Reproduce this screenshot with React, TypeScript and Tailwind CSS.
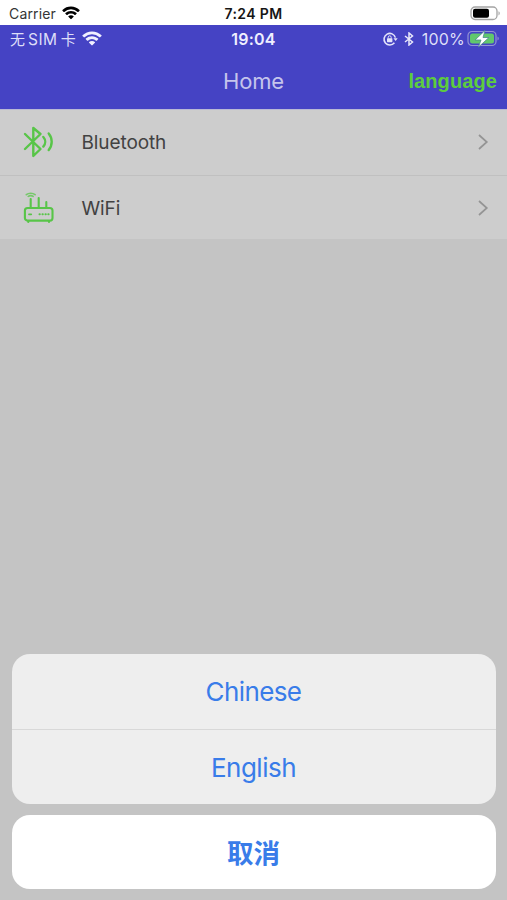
import type { ReactNode } from "react";

function WifiGlyph({ className }: { className: string }) {
  return (
    <svg viewBox="0 0 20 15" className={className} fill="currentColor">
      <path d="M10 0.4c3.7 0 7 1.4 9.5 3.8.2.2.2.5 0 .7l-1.4 1.4c-.2.2-.5.2-.7 0A10.700 10.700 0 0 0 2.600 6.300c-.2.2-.5.2-.7 0L.5 4.900c-.2-.2-.2-.5 0-.7A13.700 13.700 0 0 1 10 .4z" />
      <path d="M10 5.200c2.400 0 4.600.9 6.200 2.400.2.2.2.5 0 .7l-1.400 1.400c-.2.2-.5.2-.7 0a6 6 0 0 0-8.200 0c-.2.2-.5.2-.7 0L3.800 8.300c-.2-.2-.2-.5 0-.7A9 9 0 0 1 10 5.200z" />
      <path d="M10 9.900c1.100 0 2.100.4 2.900 1.100.2.2.2.5 0 .7l-2.500 2.600c-.2.2-.6.2-.8 0l-2.500-2.600c-.2-.2-.2-.5 0-.7.8-.7 1.800-1.100 2.900-1.100z" />
    </svg>
  );
}

function BluetoothIcon() {
  return (
    <svg viewBox="0 0 34 34" className="h-[34px] w-[34px]" fill="none" stroke="#58c548" strokeWidth="2.400" strokeLinecap="round" strokeLinejoin="round">
      <path d="M3 9l15.500 15L11.300 31V3L18.500 9 3 24" />
      <path d="M21.300 12c2.500 2.800 2.500 6.800 0 9.600M26.700 8.500c4 4.900 4 11.700 0 16.600" />
    </svg>
  );
}

function RouterIcon() {
  return (
    <svg viewBox="0 0 34 34" className="h-[34px] w-[34px]" fill="none" stroke="#58c548" strokeWidth="2.100" strokeLinecap="round" strokeLinejoin="round">
      <rect x="2.900" y="17" width="27.600" height="12.600" rx="2.600" />
      <path d="M8.700 8V17M16.700 7V17M24.300 11V17M6.300 30v1M27 30v1" />
      <path d="M7 23.300h2.200" strokeWidth="1.800" />
      <path d="M17.500 23.300h.3M20.500 23.300h.3M23.500 23.300h.3M26.300 23.300h.3" strokeWidth="2" />
      <path d="M4.300 3.700c2.400-2 6.400-2 8.800 0M6.200 5.400c1.500-1 3.500-1 5 0" strokeWidth="1.600" opacity=".75" />
    </svg>
  );
}

function Row({ icon, label }: { icon: ReactNode; label: string }) {
  return (
    <div className="flex h-full items-center pr-[18px] pl-[22px]">
      {icon}
      <span className="ml-[25.500px] flex-1 pt-[2px] text-[19px] leading-6 tracking-[-0.100px] text-[#424242]">{label}</span>
      <svg viewBox="0 0 12 16" className="h-4 w-3" fill="none" stroke="#949494" strokeWidth="1.700">
        <path d="M2 1l7.800 7L2 15" />
      </svg>
    </div>
  );
}

export default function App() {
  return (
    <div className="flex h-[900px] w-[507px] flex-col overflow-hidden bg-[#c4c4c4] font-['Inter','Noto_Sans_CJK_SC',sans-serif]">
      <div className="grid h-[25px] shrink-0 grid-cols-3 items-center bg-white pt-[2px] text-[#161616]">
        <div className="flex items-center pl-[9px]">
          <span className="w-[53px] text-[14px] leading-5 tracking-[0.150px] text-[#353535]">Carrier</span>
          <WifiGlyph className="-mt-px h-[14px] w-[18px] text-black" />
        </div>
        <span className="text-center text-[14px] leading-5 font-semibold tracking-[0.350px]">7:24 PM</span>
        <div className="flex justify-end pr-[6px]">
          <svg viewBox="0 0 31 15" className="h-[15px] w-[31px]">
            <rect x="1" y="1" width="26" height="12.500" rx="4" fill="white" stroke="#a4a4a4" strokeWidth="1.300" />
            <rect x="3" y="2.800" width="16" height="9" rx="2" fill="#000" />
            <path d="M28.500 5.200v4.200c1.700-.6 1.700-3.600 0-4.200z" fill="#a4a4a4" />
          </svg>
        </div>
      </div>

      <header className="h-[85px] shrink-0 border-b border-[#b9b9d5] bg-[#4543c4]">
        <div className="grid h-[28px] grid-cols-3 items-center text-[#dedef8]">
          <div className="flex items-center pl-[10px]">
            <span className="w-[72px] pt-px text-[15px] leading-5 whitespace-pre">无<span className="ml-[3px] mr-[3px] text-[15.500px] tracking-[0.500px]">SIM</span>卡</span>
            <WifiGlyph className="-mt-px h-[15px] w-5 text-[#f0f0ff]" />
          </div>
          <span className="text-center text-[16px] leading-5 font-semibold tracking-[0.200px] text-[#efefff]">19:04</span>
          <div className="flex items-center justify-end pr-[7px]">
            <svg viewBox="0 0 16 16" className="h-4 w-4 shrink-0" fill="none" stroke="#e4e4fa" strokeWidth="1.600">
              <path d="M12.400 11.800a5.800 5.800 0 1 1 1-5.200" />
              <path d="M11.500 7.200h4.200l-2.100 2.700z" fill="#e4e4fa" stroke="none" />
              <rect x="5" y="7.200" width="5.400" height="4" rx=".6" fill="#e4e4fa" stroke="none" />
              <path d="M6.200 7.500V6.300a1.500 1.500 0 0 1 3 0v1.200" strokeWidth="1" />
            </svg>
            <svg viewBox="0 0 10 14" className="ml-[6px] h-[14px] w-[10px] shrink-0" fill="none" stroke="#e8e8fa" strokeWidth="1.500">
              <path d="M1 4l7.500 6L5 13V1l3.500 3L1 10" />
            </svg>
            <span className="ml-[8px] text-[16px] leading-5 tracking-[0.200px]">100%</span>
            <svg viewBox="0 0 33 18" className="ml-[2px] h-[18px] w-[33px] shrink-0">
              <rect x="1" y="1.500" width="28" height="14" rx="4" fill="none" stroke="#9393d5" strokeWidth="1.200" />
              <rect x="3" y="3.500" width="24" height="10" rx="2.500" fill="#61c86c" />
              <path d="M30.500 6.500v4c1.700-.7 1.700-3.300 0-4z" fill="#9393d5" />
              <path d="M18 .5L8 10h6l-2.500 7L22 7.500h-6z" fill="white" stroke="#4d8d8d" strokeWidth=".8" />
            </svg>
          </div>
        </div>
        <div className="grid h-[56px] grid-cols-[1fr_auto_1fr] items-center">
          <h1 className="col-start-2 text-[22px] leading-7 tracking-[-0.150px] text-[#c5c5ec]">Home</h1>
          <button className="justify-self-end pr-[10px] font-['Liberation_Sans',sans-serif] text-[20px] leading-7 font-bold tracking-[0.100px] text-[#5dcc3e]">language</button>
        </div>
      </header>

      <main className="h-[129px] shrink-0 bg-[#cdcdcd]">
        <div className="h-[66px] border-b border-[#c0c0c0] pb-px"><Row icon={<BluetoothIcon />} label="Bluetooth" /></div>
        <div className="h-[63px]"><Row icon={<RouterIcon />} label="WiFi" /></div>
      </main>

      <div className="mx-[11.500px] mt-auto mb-[11px] flex shrink-0 flex-col gap-[11px] text-[#397ce9]">
        <div className="h-[150px] overflow-hidden rounded-[18px] bg-[#eeeeee]">
          <button className="flex h-[75.500px] w-full items-center justify-center border-b border-[#d8d8d8] text-[26px] tracking-[-0.600px]">Chinese</button>
          <button className="flex h-[74.500px] w-full items-center justify-center pt-px text-[26px] tracking-[-0.500px]">English</button>
        </div>
        <button className="flex h-[74px] items-center justify-center rounded-[18px] bg-white font-['Noto_Sans_CJK_SC',sans-serif] text-[26.500px] font-bold">取消</button>
      </div>
    </div>
  );
}
